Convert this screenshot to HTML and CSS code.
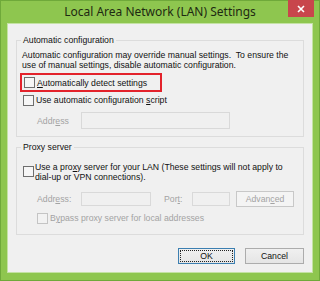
FILE: index.html
```html
<!DOCTYPE html>
<html>
<head>
<meta charset="utf-8">
<link rel="stylesheet" href="styles.css">
</head>
<body>
<div class="window">
  <div class="titlebar">
    <span></span>
    <span class="title">Local Area Network (LAN) Settings</span>
    <span class="close-wrap"><span class="close"><svg width="8" height="8" viewBox="0 0 8 8"><path d="M1 1L7 7M7 1L1 7" stroke="#fff" stroke-width="1.6"/></svg></span></span>
  </div>
  <div class="client">
    <fieldset class="group g1">
      <legend>Automatic configuration</legend>
      <p class="desc"><span class="line">Automatic configuration may override manual settings.&nbsp; To ensure the</span><span class="line">use of manual settings, disable automatic configuration.</span></p>
      <div class="highlight"><span class="cb"></span><span class="lbl"><u>A</u>utomatically detect settings</span></div>
      <div class="row r2"><span class="cb"></span><span class="lbl">Use automatic configuration <u>s</u>cript</span></div>
      <div class="row addr1"><span class="dis flabel">Addr<u>e</u>ss</span><span class="input in-wide"></span></div>
    </fieldset>
    <fieldset class="group g2">
      <legend>Proxy server</legend>
      <div class="proxy-row"><span class="cb cb-top"></span><span class="lbl multi"><span class="line">Use a pro<u>x</u>y server for your LAN (These settings will not apply to</span><span class="line">dial-up or VPN connections).</span></span></div>
      <div class="row addr2">
        <span class="dis flabel">Addr<u>e</u>ss:</span><span class="input in-addr"></span>
        <span class="dis plabel">Por<u>t</u>:</span><span class="input in-port"></span>
        <span class="btn btn-dis">Advan<u>c</u>ed</span>
      </div>
      <div class="row bypass"><span class="cb cb-dis"></span><span class="dis">B<u>y</u>pass proxy server for local addresses</span></div>
    </fieldset>
    <div class="buttons">
      <span class="btn btn-ok"><span class="focus">OK</span></span>
      <span class="btn btn-cancel">Cancel</span>
    </div>
  </div>
</div>
</body>
</html>
```
FILE: styles.css
```css
* { box-sizing: border-box; }
html, body { margin: 0; padding: 0; }
body {
  width: 320px;
  height: 281px;
  overflow: hidden;
  font-family: "Liberation Sans", Arial, sans-serif;
  font-size: 8.7px;
  color: #111;
}
.window {
  width: 320px;
  height: 281px;
  background: #8ec64f;
  border: 1px solid #6fa93a;
  display: flex;
  flex-direction: column;
}
.titlebar {
  height: 22px;
  display: grid;
  grid-template-columns: 1fr auto 1fr;
  align-items: start;
}
.title {
  font-family: "Noto Sans", sans-serif;
  font-size: 12px;
  line-height: 22px;
  color: #1e2a12;
}
.close-wrap {
  display: flex;
  justify-content: flex-end;
  padding-right: 5px;
}
.close {
  width: 26px;
  height: 17px;
  margin-top: -1px;
  background: #c8464c;
  display: flex;
  align-items: center;
  justify-content: center;
}
.client {
  margin: 0 6px 7px 6px;
  flex: 1;
  background: #f0f0f0;
  border: 1px solid #c4e2a4;
  padding: 10px 8px 0 8px;
  display: flex;
  flex-direction: column;
}
.group {
  margin: 0;
  padding: 0;
  border: 1px solid #dcdcdc;
  min-width: 0;
}
.group legend {
  margin-left: 4px;
  padding: 0 2px;
  line-height: 12px;
}
.line { display: block; height: 10px; line-height: 10px; white-space: nowrap; }
.desc {
  margin: 4px 0 0 5px;
  white-space: nowrap;
}
.highlight {
  margin: 3px 0 0 3px;
  width: 142px;
  height: 19px;
  border: 2px solid #e3222b;
  display: flex;
  align-items: center;
  padding-left: 2px;
}
.cb {
  width: 11px;
  height: 11px;
  border: 1px solid #6e6e6e;
  background: #f6f6f6;
  flex: none;
}
.cb-dis {
  border-color: #c4c4c4;
  background: #f2f2f2;
}
.lbl { margin-left: 2px; white-space: nowrap; }
.row {
  display: flex;
  align-items: center;
}
.r2 { height: 16px; margin-left: 6px; }
.addr1 { margin-top: 4px; margin-left: 20px; margin-bottom: 7px; }
.dis { color: #a3a3a3; white-space: nowrap; }
.flabel { width: 44px; }
.input {
  height: 17px;
  border: 1px solid #d9d9d9;
  background: #f0f0f0;
}
.in-wide { width: 149px; }
.g2 { margin-top: 4px; }
.proxy-row {
  display: flex;
  align-items: flex-start;
  margin: 9px 0 0 6px;
}
.cb-top { margin-top: 4px; }
.multi { margin-left: 1px; }
.addr2 { margin: 9px 0 0 20px; height: 16px; }
.addr2 .input { height: 14px; }
.in-addr { width: 70px; }
.plabel { margin-left: 13px; width: 28px; }
.in-port { width: 38px; }
.btn {
  display: flex;
  align-items: center;
  justify-content: center;
  height: 16px;
  border: 1px solid #acacac;
  background: linear-gradient(#f0f0f0, #e5e5e5);
}
.btn-dis {
  margin-left: 6px;
  width: 58px;
  border-color: #c8c8c8;
  background: #f4f4f4;
  color: #a3a3a3;
}
.bypass { margin: 4px 0 9px 20px; height: 14px; }
.bypass .dis { margin-left: 2px; }
.buttons {
  display: flex;
  justify-content: flex-end;
  gap: 10px;
  margin-top: 13px;
}
.btn-ok {
  width: 57px;
  border-color: #3c7fb1;
  padding: 1px;
}
.focus {
  width: 100%;
  height: 100%;
  border: 1px dotted #222;
  display: flex;
  align-items: center;
  justify-content: center;
}
.btn-cancel { width: 59px; }
u { text-decoration-thickness: 1px; text-underline-offset: 1px; }
```
